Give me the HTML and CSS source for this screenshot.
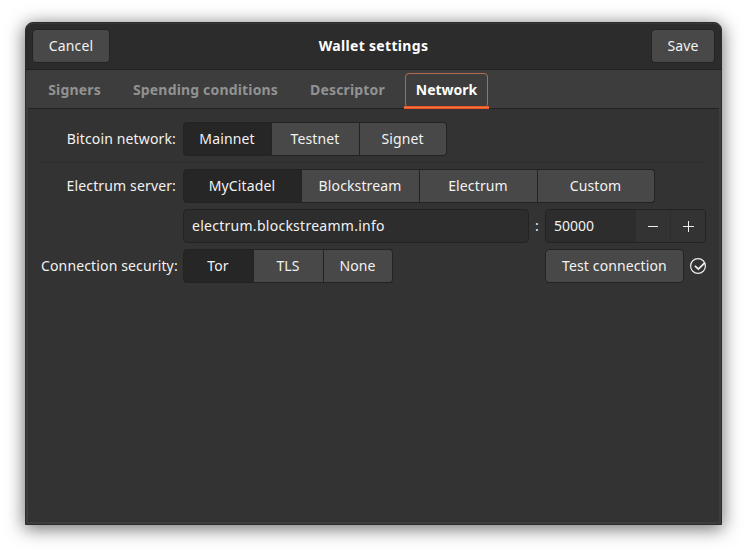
FILE: index.html
```html
<!DOCTYPE html>
<html lang="en">
<head>
<meta charset="utf-8">
<title>Wallet settings</title>
<link rel="stylesheet" href="styles.css">
</head>
<body>
<main class="window">
  <header class="titlebar">
    <button class="btn cancel">Cancel</button>
    <h1>Wallet settings</h1>
    <button class="btn save">Save</button>
  </header>
  <div class="frame">
    <nav class="tabs">
      <a class="tab signers">Signers</a>
      <a class="tab spending">Spending conditions</a>
      <a class="tab descriptor">Descriptor</a>
      <a class="tab network active">Network</a>
    </nav>
    <section class="page">
      <div class="row">
        <label>Bitcoin network:</label>
        <div class="group chain">
          <button class="on">Mainnet</button><button>Testnet</button><button>Signet</button>
        </div>
      </div>
      <hr>
      <div class="row">
        <label>Electrum server:</label>
        <div class="group server">
          <button class="on">MyCitadel</button><button>Blockstream</button><button>Electrum</button><button>Custom</button>
        </div>
      </div>
      <div class="row">
        <label></label>
        <div class="entry host">electrum.blockstreamm.info</div>
        <span class="colon">:</span>
        <div class="entry port">
          <span class="value">50000</span>
          <span class="step"><svg width="12" height="12" viewBox="0 0 12 12"><path d="M1 6.5h10"/></svg></span>
          <span class="step"><svg width="11" height="12" viewBox="0 0 11 12"><path d="M0 6.5h11M5.5 1v11"/></svg></span>
        </div>
      </div>
      <div class="row">
        <label>Connection security:</label>
        <div class="group security">
          <button class="on">Tor</button><button>TLS</button><button>None</button>
        </div>
        <button class="btn test">Test connection</button>
        <svg class="check" width="16" height="16" viewBox="0 0 16 16"><circle cx="8" cy="8" r="7.4"/><path class="tick" d="M4.9 7.8l3.5 3.3 6.3-6.3"/></svg>
      </div>
    </section>
  </div>
</main>
</body>
</html>
```
FILE: styles.css
```css
* { box-sizing: border-box; }
body {
  margin: 0;
  padding: 22px 25px;
  height: 553px;
  overflow: hidden;
  background: #fff;
  color: #f2f2f2;
  font: 14px/20px "Noto Sans", sans-serif;
}
.window {
  width: 697px;
  height: 503px;
  display: flex;
  flex-direction: column;
  border: 1px solid #2c2c2c;
  border-radius: 8px 8px 0 0;
  background: #3d3d3d;
  box-shadow: 0 3px 18px 1px rgba(0,0,0,.55);
}
.titlebar {
  height: 47px;
  flex: none;
  display: flex;
  align-items: flex-start;
  justify-content: space-between;
  padding: 5px 6px 0;
  background: #2c2c2c;
  border-top: 1px solid #383838;
  border-bottom: 1px solid #222;
  border-radius: 7px 7px 0 0;
}
button {
  margin: 0;
  padding: 0;
  font: inherit;
  letter-spacing: .12px;
  color: inherit;
  background: #484848;
  border: 1px solid #232323;
  white-space: nowrap;
}
.btn { height: 34px; border-radius: 4px; }
.cancel { width: 78px; }
.save { width: 64px; }
h1 {
  margin: 7px 14px 0 0;
  flex: 1;
  font-size: 14px;
  line-height: 20px;
  letter-spacing: .32px;
  text-align: center;
  color: #fff;
}
.frame { flex: 1; display: flex; flex-direction: column; padding: 0 2px 2px; min-height: 0; }
.tabs {
  height: 39px;
  flex: none;
  display: flex;
  align-items: flex-start;
  border-bottom: 1px solid #222;
  padding: 3px 0 0 9px;
  font-weight: 700;
  letter-spacing: .17px;
  color: #929292;
}
.tab {
  height: 35px;
  padding-top: 6px;
  border: 1px solid transparent;
  text-align: center;
  white-space: nowrap;
}
.signers { width: 75px; }
.spending { width: 167px; margin-left: 10px; }
.descriptor { width: 97px; margin-left: 10px; }
.network { width: 83px; margin-left: 9px; position: relative; letter-spacing: 0; }
.active { color: #fff; border-color: #b46a50; border-radius: 4px; }
.active::after {
  content: "";
  position: absolute;
  left: -2px;
  right: -2px;
  bottom: -2px;
  height: 3px;
  background: linear-gradient(#e95420 1px, #f07746 1px, #f07746 2px, #e95420 2px);
}
.page {
  flex: 1;
  display: flex;
  flex-direction: column;
  gap: 6px;
  padding: 13px 13px 0;
  background: #333;
}
.row { display: flex; align-items: center; height: 34px; }
label {
  width: 136px;
  margin-right: 6px;
  padding-right: 1px;
  text-align: right;
  letter-spacing: .14px;
  white-space: nowrap;
  flex: none;
}
hr { width: 100%; height: 1px; margin: 0; border: 0; background: #2d2d2d; }
.group { display: flex; height: 34px; }
.group button { border-left-width: 0; padding-right: 1px; }
.group button:first-child { border-left-width: 1px; border-radius: 4px 0 0 4px; }
.group button:last-child { border-radius: 0 4px 4px 0; }
.group .on { background: #262626; }
.chain button { width: 88px; }
.chain button:first-child { width: 89px; }
.chain button:last-child { width: 87px; }
.server button { width: 118px; }
.server button:first-child { width: 119px; }
.server button:last-child { width: 117px; }
.security button { width: 70px; }
.security button:first-child { width: 71px; }
.security button:last-child { width: 69px; }
.entry {
  display: flex;
  flex: none;
  align-items: center;
  height: 34px;
  border: 1px solid #232323;
  border-radius: 4px;
  background: #2d2d2d;
}
.host { width: 346px; padding-left: 8px; letter-spacing: .27px; }
.colon { width: 16px; text-align: center; }
.port { width: 161px; }
.value { width: 89px; padding-left: 8px; }
.step {
  display: flex;
  align-items: center;
  justify-content: center;
  width: 35px;
  height: 32px;
  background: #333;
  border-left: 1px solid #2d2d2d;
}
.step:last-child { border-radius: 0 3px 3px 0; }
svg { fill: none; stroke: #eee; stroke-width: 1; display: block; }
.test { width: 139px; margin-left: auto; }
.check { margin-left: 6px; stroke-width: 1.2; }
.tick { stroke-width: 1.8; }
```
